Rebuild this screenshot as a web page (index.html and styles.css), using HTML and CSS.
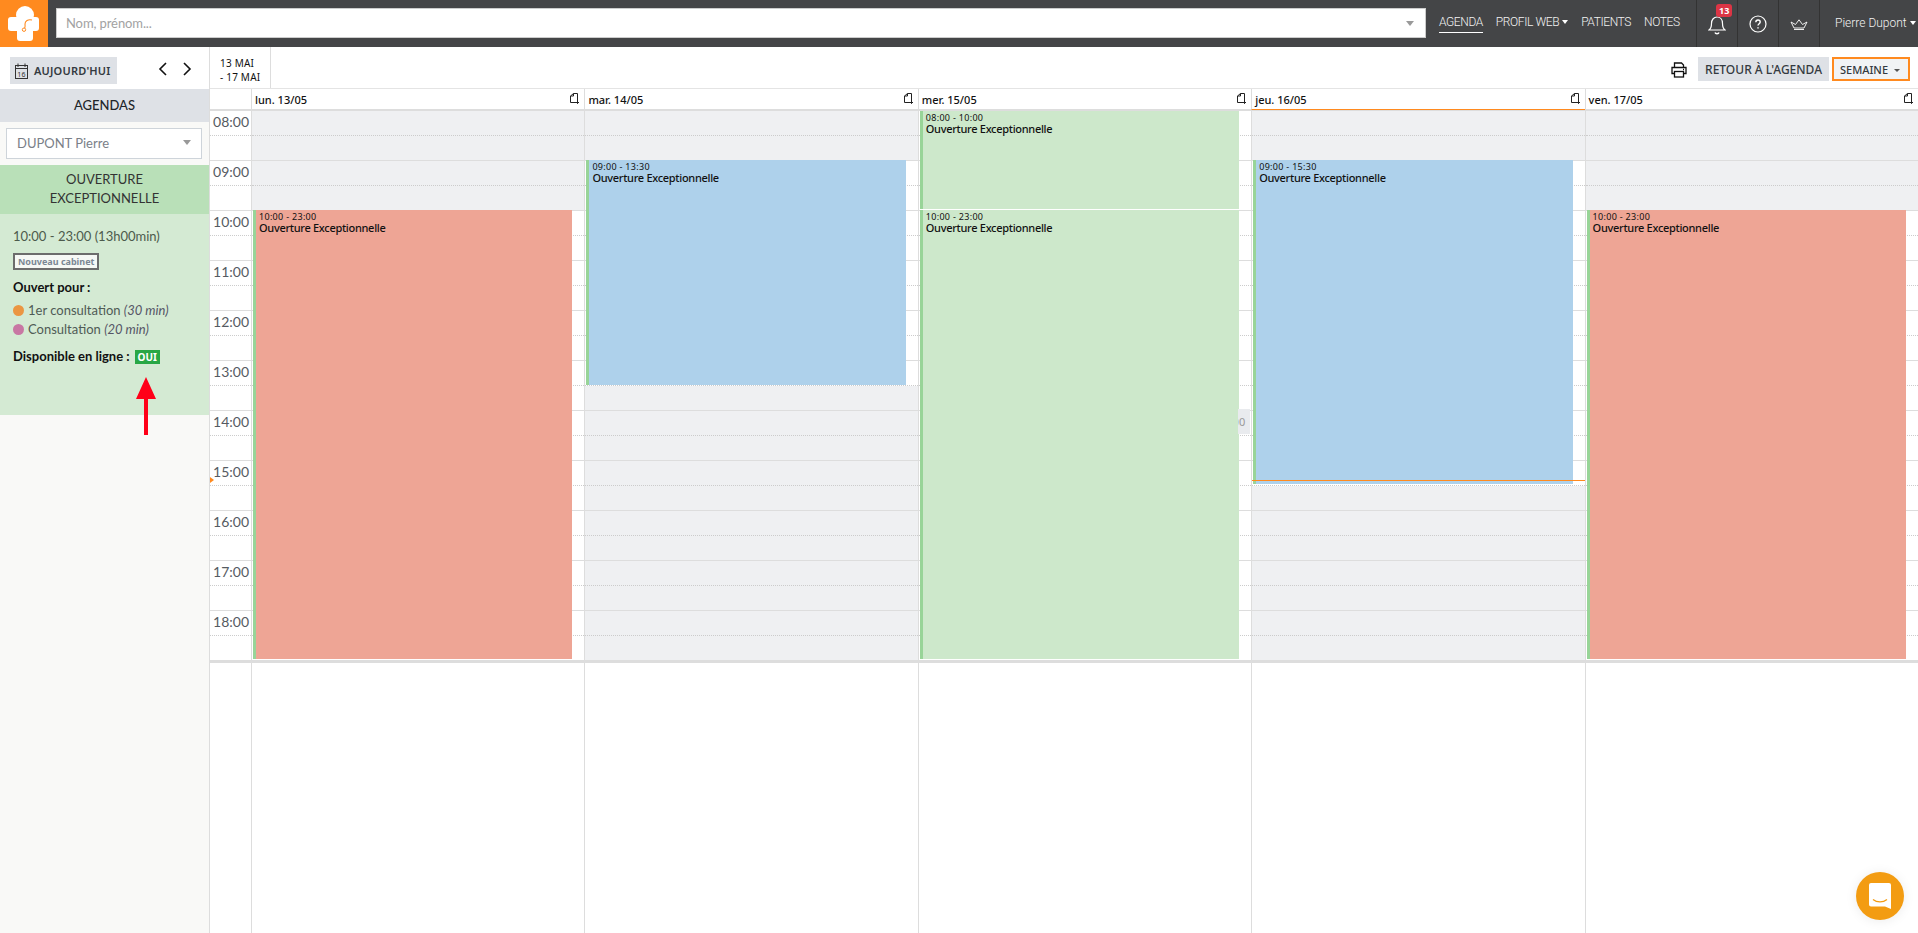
FILE: index.html
```html
<!DOCTYPE html>
<html lang="fr">
<head>
<meta charset="utf-8">
<title>Agenda</title>
<link rel="stylesheet" href="styles.css">
</head>
<body>
<header class="topbar">
  <a class="logo">
    <svg width="48" height="47" viewBox="0 0 48 47" fill="#fff"><circle cx="25" cy="15" r="9"/><rect x="8" y="17" width="31" height="14" rx="3"/><rect x="17" y="15" width="16" height="26" rx="3"/><path d="M32 20c-4-1-7 1-7 4 0 2 .5 3-.5 4" fill="none" stroke="#ff8a1f" stroke-width="1.100"/><circle cx="24" cy="29.700" r="1.700" fill="#fff" stroke="#ff8a1f"/></svg>
  </a>
  <div class="search">
    <span class="search-text">Nom, prénom...</span>
    <span class="caret-grey"></span>
  </div>
  <nav class="menu">
    <a class="menu-item active">AGENDA</a>
    <a class="menu-item drop">PROFIL WEB</a>
    <a class="menu-item">PATIENTS</a>
    <a class="menu-item">NOTES</a>
  </nav>
  <div class="tool bell">
    <svg width="18" height="22" viewBox="0 0 18 22" fill="none" stroke="#fff" stroke-width="1.200"><path d="M1 16c2-1.500 2.500-3 2.500-6.500C3.500 5.500 6 3 9 3s5.500 2.500 5.500 6.500c0 3.500.5 5 2.500 6.500z"/><path d="M7 18.500c.5 1.500 3.500 1.500 4 0" stroke-width="1.500"/></svg>
    <span class="badge">13</span>
  </div>
  <div class="tool help">
    <svg width="18" height="18" viewBox="0 0 18 18" fill="none" stroke="#fff" stroke-width="1.200"><circle cx="9" cy="9" r="8"/><path d="M6.800 7.200C6.900 5.800 7.800 5 9 5s2.200.8 2.200 2c0 1.700-2.200 1.700-2.200 3.500" stroke-width="1.400"/><path d="M9 12.200v1.300" stroke-width="1.500"/></svg>
  </div>
  <div class="tool crown">
    <svg width="18" height="11" viewBox="0 0 18 11" fill="none" stroke="#fff" stroke-width=".9"><path d="M4 9 1 3l4.500 2.500L9 .8l3.500 4.700L17 3l-3 6z"/><path d="M4 10.500h10"/></svg>
  </div>
  <a class="user drop">Pierre Dupont</a>
</header>

<main class="app">
  <aside class="sidebar">
    <div class="side-tools">
      <button class="today">
        <svg width="13" height="16" viewBox="0 0 13 16" fill="none" stroke="#333"><rect x=".5" y="2.500" width="12" height="13"/><path d="M.5 5.500h12M3 .5V4M10 .5V4"/><text class="cal-num" x="6.500" y="13.500">16</text></svg>
        AUJOURD'HUI
      </button>
      <span class="arrows">
        <svg width="9" height="14" viewBox="0 0 9 14" fill="none" stroke="#111" stroke-width="1.600"><path d="M8 1 2 7l6 6"/></svg>
        <svg width="9" height="14" viewBox="0 0 9 14" fill="none" stroke="#111" stroke-width="1.600"><path d="m1 1 6 6-6 6"/></svg>
      </span>
    </div>
    <h2 class="side-title">AGENDAS</h2>
    <div class="picker">
      <div class="select">DUPONT Pierre<span class="caret-grey"></span></div>
    </div>
    <section class="detail">
      <h3 class="detail-head">OUVERTURE<br>EXCEPTIONNELLE</h3>
      <div class="detail-body">
        <p class="hours">10:00 - 23:00 (13h00min)</p>
        <span class="cabinet">Nouveau cabinet</span>
        <p class="strong open-for">Ouvert pour :</p>
        <p class="motif first"><i class="dot orange"></i>1er consultation <em>(30 min)</em></p>
        <p class="motif"><i class="dot pink"></i>Consultation <em>(20 min)</em></p>
        <p class="strong online">Disponible en ligne : <span class="yes">OUI</span></p>
      </div>
    </section>
    <svg class="red-arrow" width="20" height="60" viewBox="0 0 20 60"><path d="M10 1 20 23H12V59H8V23H0z" fill="#ff0018"/></svg>
  </aside>

  <section class="calendar">
    <div class="cal-tools">
      <div class="range">13 MAI<br>- 17 MAI</div>
      <div class="cal-actions">
        <svg width="16" height="16" viewBox="0 0 16 16" fill="none" stroke="#111" stroke-width="1.300"><path d="M3.500 5V1h7l2 2v2M3.500 11.500H1V5.500h14v6h-2.500"/><rect x="3.500" y="9.500" width="9" height="5.500"/><path d="M12 7.500h1"/></svg>
        <button class="btn">RETOUR À L'AGENDA</button>
        <button class="btn week">SEMAINE<span class="caret-dark"></span></button>
      </div>
    </div>

    <div class="day-heads">
      <div class="corner"></div>
      <div class="day-head">lun. 13/05<svg class="copy" width="10" height="11" viewBox="0 0 10 11" fill="none" stroke="#222"><path d="M6 .5H3.500L.5 3v6.500H6M3.500.5V3H.5M6 .5h1.500V7"/><path d="M7.500 6.500v4M6 9l1.500 1.500L9 9"/></svg></div>
      <div class="day-head">mar. 14/05<svg class="copy" width="10" height="11" viewBox="0 0 10 11" fill="none" stroke="#222"><path d="M6 .5H3.500L.5 3v6.500H6M3.500.5V3H.5M6 .5h1.500V7"/><path d="M7.500 6.500v4M6 9l1.500 1.500L9 9"/></svg></div>
      <div class="day-head">mer. 15/05<svg class="copy" width="10" height="11" viewBox="0 0 10 11" fill="none" stroke="#222"><path d="M6 .5H3.500L.5 3v6.500H6M3.500.5V3H.5M6 .5h1.500V7"/><path d="M7.500 6.500v4M6 9l1.500 1.500L9 9"/></svg></div>
      <div class="day-head today-col">jeu. 16/05<svg class="copy" width="10" height="11" viewBox="0 0 10 11" fill="none" stroke="#222"><path d="M6 .5H3.500L.5 3v6.500H6M3.500.5V3H.5M6 .5h1.500V7"/><path d="M7.500 6.500v4M6 9l1.500 1.500L9 9"/></svg></div>
      <div class="day-head">ven. 17/05<svg class="copy" width="10" height="11" viewBox="0 0 10 11" fill="none" stroke="#222"><path d="M6 .5H3.500L.5 3v6.500H6M3.500.5V3H.5M6 .5h1.500V7"/><path d="M7.500 6.500v4M6 9l1.500 1.500L9 9"/></svg></div>
    </div>

    <div class="grid">
      <div class="times">
        <div class="time">08:00</div><div class="time">09:00</div><div class="time">10:00</div><div class="time">11:00</div><div class="time">12:00</div><div class="time">13:00</div><div class="time">14:00</div><div class="time">15:00</div><div class="time">16:00</div><div class="time">17:00</div><div class="time">18:00</div>
        <i class="now-mark"></i>
      </div>

      <div class="day">
        <div class="s c"></div><div class="s c"></div><div class="s c"></div><div class="s c"></div>
        <div class="s"></div><div class="s"></div><div class="s"></div><div class="s"></div><div class="s"></div><div class="s"></div>
        <div class="s"></div><div class="s"></div><div class="s"></div><div class="s"></div><div class="s"></div><div class="s"></div>
        <div class="s"></div><div class="s"></div><div class="s"></div><div class="s"></div><div class="s"></div><div class="s"></div>
        <div class="event red" style="top:99px;height:449px"><small>10:00 - 23:00</small><b>Ouverture Exceptionnelle</b></div>
      </div>

      <div class="day">
        <div class="s c"></div><div class="s c"></div>
        <div class="s"></div><div class="s"></div><div class="s"></div><div class="s"></div><div class="s"></div><div class="s"></div><div class="s"></div><div class="s"></div><div class="s"></div>
        <div class="s c"></div><div class="s c"></div><div class="s c"></div><div class="s c"></div><div class="s c"></div><div class="s c"></div><div class="s c"></div><div class="s c"></div><div class="s c"></div><div class="s c"></div><div class="s c"></div>
        <div class="event blue" style="top:49px;height:225px"><small>09:00 - 13:30</small><b>Ouverture Exceptionnelle</b></div>
      </div>

      <div class="day">
        <div class="s"></div><div class="s"></div><div class="s"></div><div class="s"></div><div class="s"></div><div class="s"></div><div class="s"></div><div class="s"></div><div class="s"></div><div class="s"></div><div class="s"></div>
        <div class="s"></div><div class="s"></div><div class="s"></div><div class="s"></div><div class="s"></div><div class="s"></div><div class="s"></div><div class="s"></div><div class="s"></div><div class="s"></div><div class="s"></div>
        <div class="event green" style="top:0;height:98px"><small>08:00 - 10:00</small><b>Ouverture Exceptionnelle</b></div>
        <div class="event green" style="top:99px;height:449px"><small>10:00 - 23:00</small><b>Ouverture Exceptionnelle</b></div>
        <span class="hover-label">00</span>
      </div>

      <div class="day">
        <div class="s c"></div><div class="s c"></div>
        <div class="s"></div><div class="s"></div><div class="s"></div><div class="s"></div><div class="s"></div><div class="s"></div><div class="s"></div><div class="s"></div><div class="s"></div><div class="s"></div><div class="s"></div><div class="s"></div><div class="s"></div>
        <div class="s c"></div><div class="s c"></div><div class="s c"></div><div class="s c"></div><div class="s c"></div><div class="s c"></div><div class="s c"></div>
        <div class="event blue" style="top:49px;height:324px"><small>09:00 - 15:30</small><b>Ouverture Exceptionnelle</b></div>
        <i class="now-line"></i>
      </div>

      <div class="day">
        <div class="s c"></div><div class="s c"></div><div class="s c"></div><div class="s c"></div>
        <div class="s"></div><div class="s"></div><div class="s"></div><div class="s"></div><div class="s"></div><div class="s"></div>
        <div class="s"></div><div class="s"></div><div class="s"></div><div class="s"></div><div class="s"></div><div class="s"></div>
        <div class="s"></div><div class="s"></div><div class="s"></div><div class="s"></div><div class="s"></div><div class="s"></div>
        <div class="event red" style="top:99px;height:449px"><small>10:00 - 23:00</small><b>Ouverture Exceptionnelle</b></div>
      </div>
    </div>

    <div class="rest">
      <div></div><div></div><div></div><div></div><div></div><div></div>
    </div>
  </section>
</main>

<button class="chat">
  <svg width="22" height="26" viewBox="0 0 22 26"><path d="M2 0h18a2 2 0 0 1 2 2v24l-6-2.500H2a2 2 0 0 1-2-2V2a2 2 0 0 1 2-2z" fill="#fff"/><path d="M4 16.500c4 3.200 10 3.200 14 0" fill="none" stroke="#f39c12" stroke-width="1.300"/></svg>
</button>
</body>
</html>
```
FILE: styles.css
```css
* { box-sizing: border-box; }
html, body { height: 100%; }
body {
  margin: 0;
  display: flex;
  flex-direction: column;
  height: 933px;
  overflow: hidden;
  font-family: Lato, "Liberation Sans", sans-serif;
  color: #212529;
  background: #fff;
}
p, h2, h3 { margin: 0; }
button { font-family: inherit; border: 0; padding: 0; }

/* top bar */
.topbar {
  flex: 0 0 47px;
  display: flex;
  align-items: stretch;
  background: #444547;
  color: #fff;
}
.logo {
  flex: 0 0 48px;
  display: flex;
  background: #ff8a1f;
}
.search {
  flex: 0 0 1370px;
  margin: 8px 0 0 8px;
  height: 30px;
  display: flex;
  align-items: center;
  justify-content: space-between;
  padding: 0 11px 0 9px;
  background: #fff;
  border: 1px solid #ccc;
  font-size: 13px;
  letter-spacing: -.1px;
  color: #a2a2a2;
}
.caret-grey {
  display: inline-block;
  width: 0;
  height: 0;
  border: 4px solid transparent;
  border-top: 5px solid #999;
  border-bottom: 0;
}
.menu {
  flex: 0 0 270px;
  min-width: 0;
  display: flex;
  gap: 13px;
  padding-left: 13px;
  align-items: flex-start;
  padding-top: 14px;
  font: 300 12px Roboto, sans-serif;
  letter-spacing: -.4px;
}
.menu-item { height: 19px; line-height: 16px; border-bottom: 1px solid transparent; color: #f2f2f2; white-space: nowrap; }
.menu-item.active { border-bottom-color: #fff; }
.drop::after {
  content: "";
  display: inline-block;
  margin-left: 3px;
  vertical-align: 2px;
  border: 3.500px solid transparent;
  border-top: 4px solid #fff;
  border-bottom: 0;
}
.tool {
  position: relative;
  flex: 0 0 41px;
  display: flex;
  align-items: center;
  justify-content: center;
  border-left: 1px solid #333;
}
.tool svg { margin-top: 1px; }
.bell svg { margin-top: 3px; }
.badge {
  position: absolute;
  top: 4px;
  left: 19px;
  padding: 0 3px;
  height: 13px;
  border-radius: 3px;
  background: #dc3545;
  font: 700 9px/13px "Noto Sans", sans-serif;
}
.user {
  flex: 1;
  border-left: 1px solid #333;
  padding: 15px 0 0 15px;
  font: 300 12px/16px Roboto, sans-serif;
  color: #f2f2f2;
  white-space: nowrap;
}

/* layout */
.app { flex: 1; display: flex; min-height: 0; }
.sidebar {
  position: relative;
  flex: 0 0 210px;
  background: #f9f9f7;
  border-right: 1px solid #ddd;
}
.side-tools {
  height: 42px;
  background: #fff;
  display: flex;
  align-items: flex-start;
  padding: 10px 0 0 10px;
}
.today {
  display: flex;
  align-items: center;
  gap: 6px;
  width: 107px;
  height: 27px;
  padding-left: 5px;
  background: #dee1e6;
  color: #343a40;
  font: 600 11px "Noto Sans", sans-serif;
  letter-spacing: .2px;
}
.cal-num { font: 7px "Noto Sans", sans-serif; text-anchor: middle; fill: #333; stroke: none; }
.arrows { display: flex; gap: 16px; margin: 5px 0 0 41px; }
.side-title {
  height: 33px;
  line-height: 33px;
  background: #dee1e6;
  text-align: center;
  font-size: 13px;
  font-weight: 500;
  color: #212529;
}
.picker { padding: 6px 7px 6px 6px; }
.select {
  height: 31px;
  display: flex;
  align-items: center;
  justify-content: space-between;
  padding: 0 10px 2px;
  background: #fff;
  border: 1px solid #ced4da;
  font-size: 13px;
  color: #7a8088;
}
.detail { background: #d4ead3; height: 250px; }
.detail-head {
  height: 49px;
  padding-top: 5px;
  background: #b9e0b8;
  text-align: center;
  font-size: 13px;
  line-height: 19px;
  font-weight: 400;
  color: #333;
}
.detail-body { padding: 12px 13px 0; font-size: 13px; color: #495057; }
.hours { line-height: 20px; color: #4c5a4c; }
.cabinet {
  display: inline-block;
  margin-top: 7px;
  padding: 0 3px;
  height: 17px;
  border: 2px solid #6c6c6c;
  background: #f6f8f5;
  font: 700 9px/13px "Noto Sans", sans-serif;
  color: #7b8794;
}
.strong { font-weight: 700; color: #111; font-size: 13px; }
.open-for { margin-top: 7px; line-height: 20px; }
.motif { line-height: 19px; font-size: 13px; color: #4f5b55; }
.motif.first { margin-top: 4px; }
.motif em { color: #556; }
.dot {
  display: inline-block;
  width: 11px;
  height: 11px;
  margin-right: 4px;
  border-radius: 50%;
  vertical-align: -1px;
}
.orange { background: #eb9642; }
.pink { background: #c877a3; }
.online { margin-top: 7px; line-height: 20px; }
.yes {
  display: inline-block;
  width: 25px;
  height: 14px;
  margin-left: 2px;
  background: #28a745;
  color: #fff;
  text-align: center;
  font: 700 10px/14px "Noto Sans", sans-serif;
}
.red-arrow { position: absolute; left: 136px; top: 329px; }

/* calendar */
.calendar { flex: 1; min-width: 0; display: flex; flex-direction: column; }
.cal-tools {
  height: 42px;
  display: flex;
  justify-content: space-between;
  border-bottom: 1px solid #e4e4e4;
}
.range {
  width: 61px;
  padding: 9px 0 0 10px;
  border-right: 1px solid #ddd;
  font: 10px/14px "Noto Sans", sans-serif;
  color: #111;
  letter-spacing: .2px;
}
.cal-actions { display: flex; align-items: flex-start; padding: 10px 8px 0 0; gap: 3px; }
.cal-actions svg { margin: 5px 8px 0 0; }
.btn {
  height: 24px;
  padding: 0 7px;
  background: #dee1e6;
  color: #343a40;
  font: 500 12px "Noto Sans", sans-serif;
}
.btn.week {
  background: #f1f3f5;
  border: 2px solid #ff8a1f;
  padding: 0 5px 0 6px;
  width: 78px;
  font-size: 11px;
  text-align: left;
  white-space: nowrap;
}
.caret-dark {
  display: inline-block;
  margin-left: 6px;
  vertical-align: 2px;
  border: 3px solid transparent;
  border-top: 3px solid #555;
  border-bottom: 0;
}

.day-heads, .grid, .rest {
  display: grid;
  grid-template-columns: 41px repeat(5, 1fr);
}
.day-heads { height: 22px; border-bottom: 2px solid #ddd; }
.day-head {
  position: relative;
  border-left: 1px solid #ddd;
  padding: 2px 0 0 3px;
  font: 500 11px/18px "Noto Sans", sans-serif;
  color: #111;
}
.today-col { height: 21px; border-bottom: 1px solid #ff8a1f; }
.copy { position: absolute; right: 4px; top: 4px; }
.grid { height: 550px; }
.times { position: relative; }
.time {
  position: relative;
  height: 50px;
  padding: 1px 2px 0 0;
  text-align: right;
  font-size: 14px;
  line-height: 20px;
  color: #555b62;
  border-bottom: 1px solid #ddd;
}
.time::after {
  content: "";
  position: absolute;
  left: 0;
  right: 0;
  top: 24px;
  border-top: 1px dotted #ccc;
}
.now-mark {
  position: absolute;
  left: 0;
  top: 366px;
  border: 3px solid transparent;
  border-left: 4px solid #ff8a1f;
}
.day { position: relative; border-left: 1px solid #ddd; }
.s { height: 25px; border-bottom: 1px dotted #ccc; }
.s:nth-child(even) { border-bottom: 1px solid #ddd; }
.s.c { background: #eff0f2; }
.event {
  position: absolute;
  left: 1px;
  right: 12px;
  padding: 1px 0 0 3px;
  border-left: 3px solid #98d498;
  overflow: hidden;
  color: #111;
}
.event small { display: block; font: 9px/11px "Noto Sans", sans-serif; letter-spacing: .3px; }
.event b { display: block; font: 500 11px/12px "Noto Sans", sans-serif; letter-spacing: -.3px; }
.red { background: #eea595; }
.blue { background: #aed1eb; }
.green { background: #cde8cb; }
.hover-label {
  position: absolute;
  right: 1px;
  top: 298px;
  width: 12px;
  height: 25px;
  padding-right: 5px;
  display: flex;
  justify-content: flex-end;
  background: #e9ebee;
  font: 11px/25px "Noto Sans", sans-serif;
  color: #999;
  overflow: hidden;
}
.now-line {
  position: absolute;
  left: 0;
  right: 0;
  top: 369px;
  height: 1px;
  background: #ff8a1f;
}
.rest {
  flex: 1;
  border-top: 2px solid #ddd;
}
.rest div + div { border-left: 1px solid #ddd; }

.chat {
  position: absolute;
  right: 14px;
  bottom: 13px;
  width: 48px;
  height: 48px;
  border-radius: 50%;
  background: #f39c12;
  display: flex;
  align-items: center;
  justify-content: center;
  box-shadow: 0 1px 12px rgba(0,0,0,.08);
}
```
